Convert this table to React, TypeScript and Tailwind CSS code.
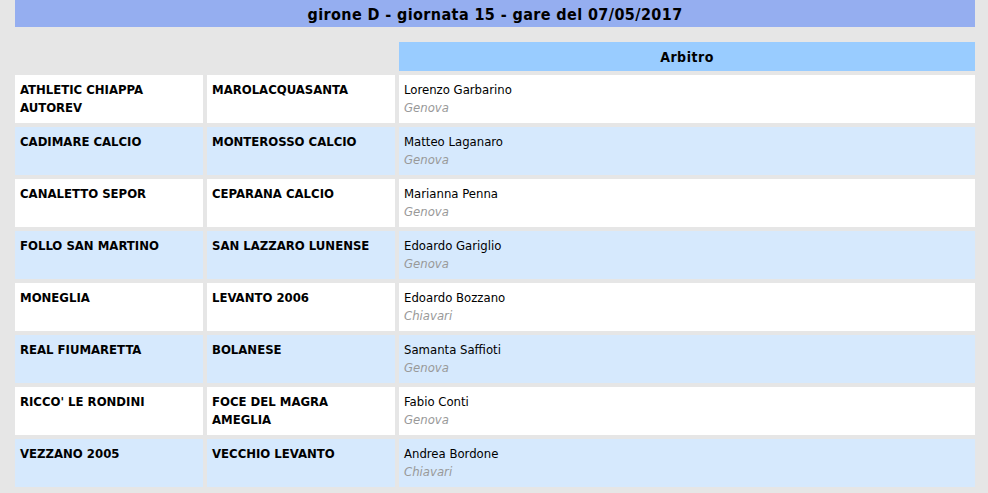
import React from "react";

const rows = [
  ["ATHLETIC CHIAPPA AUTOREV", "MAROLACQUASANTA", "Lorenzo Garbarino", "Genova"],
  ["CADIMARE CALCIO", "MONTEROSSO CALCIO", "Matteo Laganaro", "Genova"],
  ["CANALETTO SEPOR", "CEPARANA CALCIO", "Marianna Penna", "Genova"],
  ["FOLLO SAN MARTINO", "SAN LAZZARO LUNENSE", "Edoardo Gariglio", "Genova"],
  ["MONEGLIA", "LEVANTO 2006", "Edoardo Bozzano", "Chiavari"],
  ["REAL FIUMARETTA", "BOLANESE", "Samanta Saffioti", "Genova"],
  ["RICCO' LE RONDINI", "FOCE DEL MAGRA AMEGLIA", "Fabio Conti", "Genova"],
  ["VEZZANO 2005", "VECCHIO LEVANTO", "Andrea Bordone", "Chiavari"],
];

export default function App() {
  return (
    <div
      className="min-h-[493px] w-full bg-[#e6e6e6] px-[15px] pb-[6px] text-black"
      style={{ fontFamily: '"DejaVu Sans Condensed", "DejaVu Sans", sans-serif' }}
    >
      <div className="flex h-[27px] w-[960px] items-center justify-center bg-[#95aef0] pt-[2px] text-[16px] font-bold leading-none tracking-[0.4px]">
        girone D - giornata 15 - gare del 07/05/2017
      </div>
      <div className="mt-[15px] grid w-[960px] grid-cols-[188px_188px_576px] gap-[4px]">
        <div />
        <div />
        <div className="flex h-[29px] items-center justify-center bg-[#99ccff] pt-[1px] text-[14px] font-bold tracking-[0.5px]">
          Arbitro
        </div>
        {rows.map((r, i) => {
          const bg = i % 2 === 0 ? "bg-white" : "bg-[#d6e9fd]";
          return (
            <React.Fragment key={i}>
              <div className={`${bg} h-[48px] px-[5px] pt-[6px] text-[13px] font-bold leading-[18px]`}>
                {r[0]}
              </div>
              <div className={`${bg} h-[48px] px-[5px] pt-[6px] text-[13px] font-bold leading-[18px]`}>
                {r[1]}
              </div>
              <div className={`${bg} h-[48px] px-[5px] pt-[6px] text-[13px] leading-[18px]`}>
                <div>{r[2]}</div>
                <div className="italic text-[#999999]">{r[3]}</div>
              </div>
            </React.Fragment>
          );
        })}
      </div>
    </div>
  );
}
